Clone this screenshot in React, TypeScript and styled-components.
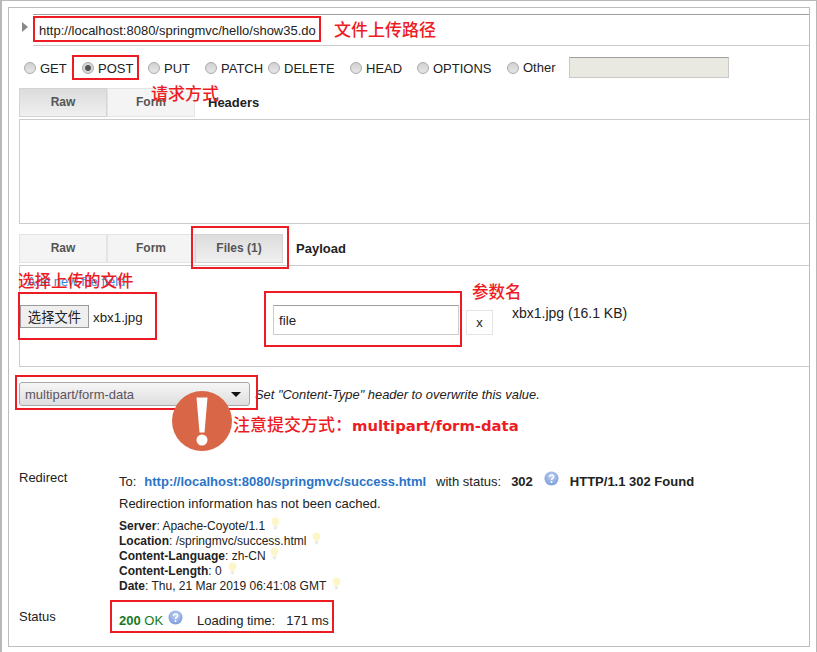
import React from 'react';
import styled, { createGlobalStyle } from 'styled-components';

const GlobalStyle = createGlobalStyle`
  html, body {
    margin: 0;
    padding: 0;
    background: #fff;
    font-family: "Liberation Sans", Arial, sans-serif;
    color: #222;
  }
`;

const Page = styled.div`
  position: relative;
  box-sizing: border-box;
  width: 817px;
  height: 652px;
  overflow: hidden;
  padding: 6px 6px 0 6px;
  border-top: 1px solid #b8b8b8;
  border-left: 2px solid #b8b8b8;
  border-right: 1px solid #b8b8b8;
  background: #fff;
`;

const Frame = styled.div`
  box-sizing: border-box;
  width: 802px;
  height: 640px;
  border: 1px solid #bdbdbd;
`;

const UrlRow = styled.div`
  display: flex;
  align-items: flex-start;
  margin-top: 6px;
  padding-left: 13px;
`;

const Arrow = styled.div`
  width: 0;
  height: 0;
  margin-top: 8px;
  margin-right: 5px;
  border-top: 5px solid transparent;
  border-bottom: 5px solid transparent;
  border-left: 6px solid #888;
`;

const UrlField = styled.div`
  flex: 1;
  box-sizing: border-box;
  height: 32px;
  padding: 0 0 0 6px;
  line-height: 31px;
  font-size: 13px;
  color: #222;
  border-top: 1px solid #a0a0a0;
  border-bottom: 1px solid #ccc;
`;

const MethodRow = styled.div`
  display: flex;
  align-items: center;
  height: 21px;
  margin-top: 11px;
  padding-left: 15px;
`;

const Method = styled.label<{ $w: number; $up?: boolean }>`
  display: flex;
  align-items: center;
  width: ${(p) => p.$w}px;
  font-size: 13px;
  color: #222;
  span {
    position: relative;
    top: ${(p) => (p.$up ? 0 : 1)}px;
  }
`;

const Radio = styled.i<{ $on?: boolean }>`
  box-sizing: border-box;
  width: 12px;
  height: 12px;
  margin-right: 4px;
  border-radius: 50%;
  border: 1px solid #a9a9a9;
  background: ${(p) =>
    p.$on
      ? 'radial-gradient(circle, #555 0, #555 2.6px, #d8d8d8 3.4px)'
      : 'linear-gradient(#d2d2d2, #e6e6e6)'};
`;

const OtherInput = styled.div`
  box-sizing: border-box;
  width: 160px;
  height: 21px;
  background: #e9e9e2;
  border: 1px solid #c8c8c8;
  border-top-color: #a0a0a0;
`;

const TabRow = styled.div<{ $top: number }>`
  display: flex;
  align-items: center;
  margin-top: ${(p) => p.$top}px;
  padding-left: 10px;
  height: 29px;
`;

const Tab = styled.div<{ $active?: boolean }>`
  box-sizing: border-box;
  width: 88px;
  height: 29px;
  line-height: 27px;
  text-align: center;
  font-size: 12px;
  font-weight: bold;
  color: #555;
  border: 1px solid #e2e2e2;
  background: ${(p) => (p.$active ? 'linear-gradient(#dcdcdc, #f0f0f0)' : '#f4f4f4')};
  border-color: ${(p) => (p.$active ? '#d4d4d4' : '#e4e4e4')};
`;

const TabTitle = styled.div`
  margin-left: 13px;
  font-size: 13px;
  font-weight: bold;
  color: #222;
`;

const HeadersBox = styled.div`
  box-sizing: border-box;
  height: 105px;
  margin: 2px 0 0 10px;
  border-top: 1px solid #ccc;
  border-left: 1px solid #ccc;
  border-bottom: 1px solid #ccc;
`;

const PayloadBox = styled.div`
  box-sizing: border-box;
  height: 102px;
  margin: 2px 0 0 10px;
  padding-top: 9px;
  border-top: 1px solid #ccc;
  border-left: 1px solid #ccc;
  border-bottom: 1px solid #ccc;
`;

const AddLink = styled.div`
  margin-left: 7px;
  font-size: 13px;
  line-height: 14px;
  color: #3b86d8;
`;

const FileRow = styled.div`
  display: flex;
  align-items: flex-start;
  margin-top: 16px;
`;

const FileButton = styled.div`
  box-sizing: border-box;
  width: 69px;
  height: 23px;
  line-height: 21px;
  text-align: center;
  font-size: 13.33px;
  font-family: "Noto Sans CJK SC", sans-serif;
  color: #222;
  background: #efefef;
  border: 1px solid #9a9a9a;
`;

const FileName = styled.div`
  width: 180px;
  margin-left: 4px;
  font-size: 13.33px;
  line-height: 25px;
`;

const ParamInput = styled.div`
  box-sizing: border-box;
  width: 186px;
  height: 30px;
  padding-left: 5px;
  line-height: 30px;
  font-size: 13.33px;
  border: 1px solid #ccc;
  border-top-color: #a0a0a0;
`;

const RemoveButton = styled.div`
  box-sizing: border-box;
  width: 27px;
  height: 25px;
  margin: 5px 0 0 7px;
  line-height: 24px;
  text-align: center;
  font-size: 13px;
  border: 1px solid #e4e4e4;
`;

const FileInfo = styled.div`
  margin: 0 0 0 19px;
  font-size: 14px;
  line-height: 16px;
`;

const TypeRow = styled.div`
  display: flex;
  align-items: center;
  margin-top: 15px;
  padding-left: 10px;
`;

const TypeSelect = styled.div`
  box-sizing: border-box;
  display: flex;
  align-items: center;
  justify-content: space-between;
  width: 231px;
  height: 24px;
  padding: 0 8px 0 5px;
  font-size: 13px;
  color: #5b5460;
  border: 1px solid #a8a8a8;
  border-radius: 3px;
  background: linear-gradient(#f6f6f6, #dedede);
`;

const Caret = styled.div`
  width: 0;
  height: 0;
  border-left: 5px solid transparent;
  border-right: 5px solid transparent;
  border-top: 5px solid #111;
`;

const TypeHint = styled.div`
  margin-left: 5px;
  font-size: 12.9px;
  font-style: italic;
  color: #222;
`;

const InfoRow = styled.div<{ $top: number }>`
  display: flex;
  align-items: flex-start;
  margin-top: ${(p) => p.$top}px;
  padding-left: 10px;
  font-size: 13px;
  line-height: 15px;
`;

const InfoLabel = styled.div`
  flex: none;
  width: 100px;
`;

const InfoBody = styled.div`
  padding-top: 3px;
`;

const Line = styled.div`
  display: flex;
  align-items: center;
  height: 16px;
  white-space: pre;
`;

const RedirectLink = styled.b`
  margin-left: 8px;
  color: #2a74c8;
`;

const Spaced = styled.span<{ $left: number }>`
  margin-left: ${(p) => p.$left}px;
`;

const Note = styled.div`
  margin-top: 7px;
`;

const HeaderList = styled.div`
  margin-top: 8px;
  font-size: 12px;
  line-height: 15px;
`;

const HeaderLine = styled.div`
  display: flex;
  align-items: center;
  height: 15px;
  white-space: pre;
`;

const OkCode = styled.b`
  color: #17791b;
`;

const OkText = styled.span`
  color: #17791b;
`;

const Layer = styled.div`
  position: absolute;
  top: -1px;
  left: -2px;
  width: 817px;
  height: 652px;
  pointer-events: none;
`;

const Mark = styled.div<{ $x: number; $y: number; $w: number; $h: number }>`
  position: absolute;
  box-sizing: border-box;
  left: ${(p) => p.$x}px;
  top: ${(p) => p.$y}px;
  width: ${(p) => p.$w}px;
  height: ${(p) => p.$h}px;
  border: 2px solid #ed1c24;
`;

const Label = styled.div<{ $x: number; $y: number; $size?: number }>`
  position: absolute;
  left: ${(p) => p.$x}px;
  top: ${(p) => p.$y}px;
  font-family: "Noto Sans CJK SC", sans-serif;
  font-size: ${(p) => p.$size ?? 17}px;
  line-height: 20px;
  font-weight: 500;
  white-space: nowrap;
  color: #ed1c24;
`;

const LabelLatin = styled.span`
  font-family: "DejaVu Sans", sans-serif;
  font-size: 14.8px;
  font-weight: bold;
`;

const WarnIcon = styled.svg`
  position: absolute;
  left: 172px;
  top: 391px;
`;

const SmallIcon = styled.svg<{ $left: number; $up?: number }>`
  flex: none;
  margin-left: ${(p) => p.$left}px;
  position: relative;
  top: ${(p) => -(p.$up ?? 0)}px;
`;

function HelpIcon({ left, up }: { left: number; up: number }) {
  return (
    <SmallIcon $left={left} $up={up} width="15" height="15" viewBox="0 0 15 15">
      <defs>
        <radialGradient id="help" cx="50%" cy="35%" r="60%">
          <stop offset="0" stopColor="#c3d3f0" />
          <stop offset="1" stopColor="#7f9fdc" />
        </radialGradient>
      </defs>
      <circle cx="7.5" cy="7.5" r="7" fill="url(#help)" />
      <path d="M5.3 5.8c.2-1.3 1.1-1.9 2.2-1.9 1.3 0 2.2.8 2.2 1.9 0 1.6-2.2 1.6-2.2 3.2" fill="none" stroke="#fff" strokeWidth="1.5" />
      <circle cx="7.5" cy="11" r="1" fill="#fff" />
    </SmallIcon>
  );
}

function Bulb({ left }: { left: number }) {
  return (
    <SmallIcon $left={left} $up={3} width="9" height="13" viewBox="0 0 9 13">
      <path d="M4.5 0.5c2.3 0 4 1.6 4 3.7 0 1.8-1.4 2.6-1.7 4.3H2.2C1.900 6.800 .5 6 .5 4.200 .5 2.100 2.200 .5 4.500 .5z" fill="#fdf6c8" />
      <path d="M2.700 9.300h3.600v1.200H2.700zM3.300 11h2.400v1.200H3.300z" fill="#e4e4d8" />
    </SmallIcon>
  );
}

const methods: { name: string; w: number; on?: boolean; up?: boolean }[] = [
  { name: 'GET', w: 58 },
  { name: 'POST', w: 66, on: true },
  { name: 'PUT', w: 57 },
  { name: 'PATCH', w: 63 },
  { name: 'DELETE', w: 82 },
  { name: 'HEAD', w: 67 },
  { name: 'OPTIONS', w: 90 },
  { name: 'Other', w: 62, up: true },
];

const headers = [
  { key: 'Server', value: 'Apache-Coyote/1.1', gap: 6 },
  { key: 'Location', value: '/springmvc/success.html', gap: 6 },
  { key: 'Content-Language', value: 'zh-CN', gap: 4 },
  { key: 'Content-Length', value: '0', gap: 6 },
  { key: 'Date', value: 'Thu, 21 Mar 2019 06:41:08 GMT', gap: 6 },
];

export default function App() {
  return (
    <>
      <GlobalStyle />
      <Page>
        <Frame>
          <UrlRow>
            <Arrow />
            <UrlField>http://localhost:8080/springmvc/hello/show35.do</UrlField>
          </UrlRow>

          <MethodRow>
            {methods.map((m) => (
              <Method key={m.name} $w={m.w} $up={m.up}>
                <Radio $on={m.on} />
                <span>{m.name}</span>
              </Method>
            ))}
            <OtherInput />
          </MethodRow>

          <TabRow $top={10}>
            <Tab $active>Raw</Tab>
            <Tab>Form</Tab>
            <TabTitle>Headers</TabTitle>
          </TabRow>
          <HeadersBox />

          <TabRow $top={10}>
            <Tab>Raw</Tab>
            <Tab>Form</Tab>
            <Tab $active>Files (1)</Tab>
            <TabTitle>Payload</TabTitle>
          </TabRow>
          <PayloadBox>
            <AddLink>Add new file field</AddLink>
            <FileRow>
              <FileButton>选择文件</FileButton>
              <FileName>xbx1.jpg</FileName>
              <ParamInput>file</ParamInput>
              <RemoveButton>x</RemoveButton>
              <FileInfo>xbx1.jpg (16.1 KB)</FileInfo>
            </FileRow>
          </PayloadBox>

          <TypeRow>
            <TypeSelect>
              multipart/form-data
              <Caret />
            </TypeSelect>
            <TypeHint>Set "Content-Type" header to overwrite this value.</TypeHint>
          </TypeRow>

          <InfoRow $top={64}>
            <InfoLabel>Redirect</InfoLabel>
            <InfoBody>
              <Line>
                To:
                <RedirectLink>http://localhost:8080/springmvc/success.html</RedirectLink>
                <Spaced $left={10}>with status:</Spaced>
                <Spaced $left={10}><b>302</b></Spaced>
                <HelpIcon left={11} up={3} />
                <Spaced $left={11}><b>HTTP/1.1 302 Found</b></Spaced>
              </Line>
              <Note>Redirection information has not been cached.</Note>
              <HeaderList>
                {headers.map((h) => (
                  <HeaderLine key={h.key}>
                    <b>{h.key}</b>: {h.value}
                    <Bulb left={h.gap} />
                  </HeaderLine>
                ))}
              </HeaderList>
            </InfoBody>
          </InfoRow>

          <InfoRow $top={15}>
            <InfoLabel>Status</InfoLabel>
            <InfoBody>
              <Line>
                <OkCode>200</OkCode>
                <OkText> OK</OkText>
                <HelpIcon left={5} up={3} />
                <Spaced $left={14}>Loading time:</Spaced>
                <Spaced $left={11}>171 ms</Spaced>
              </Line>
            </InfoBody>
          </InfoRow>
        </Frame>

        <Layer>
          <Mark $x={33} $y={16} $w={288} $h={26} />
          <Mark $x={72} $y={55} $w={67} $h={25} />
          <Mark $x={191} $y={226} $w={98} $h={43} />
          <Mark $x={18} $y={292} $w={139} $h={48} />
          <Mark $x={264} $y={291} $w={198} $h={56} />
          <Mark $x={15} $y={375} $w={243} $h={35} />
          <Mark $x={110} $y={600} $w={224} $h={33} />
          <Label $x={334} $y={19}>文件上传路径</Label>
          <Label $x={151} $y={83}>请求方式</Label>
          <Label $x={18} $y={270} $size={16.5}>选择上传的文件</Label>
          <Label $x={472} $y={281} $size={16.5}>参数名</Label>
          <WarnIcon width="60" height="60" viewBox="0 0 60 60">
            <circle cx="30" cy="30" r="30" fill="#d96647" />
            <path d="M24.500 6.500h11l-3 35h-5z" fill="#fff" />
            <circle cx="30" cy="49" r="5.500" fill="#fff" />
          </WarnIcon>
          <Label $x={233} $y={414}>
            注意提交方式：<LabelLatin>multipart/form-data</LabelLatin>
          </Label>
        </Layer>
      </Page>
    </>
  );
}
